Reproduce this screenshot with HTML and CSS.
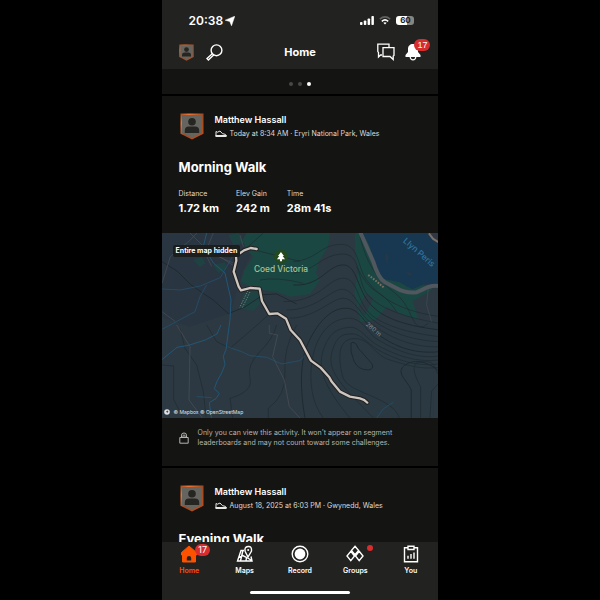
FILE: index.html
```
<!DOCTYPE html>
<html lang="en">
<head>
  <meta charset="UTF-8">
  <meta name="viewport" content="width=device-width, initial-scale=1.0">
  <title>Home</title>
  <link rel="stylesheet" href="styles.css">
</head>
<body>
  <!-- Shared shapes -->
  <svg class="defs" aria-hidden="true">
    <defs>
      <linearGradient id="frame" x1="0" y1="0" x2="1" y2="1">
        <stop offset="0" stop-color="#9c4d25"/>
        <stop offset=".2" stop-color="#ee7434"/>
        <stop offset=".5" stop-color="#9b4b25"/>
        <stop offset="1" stop-color="#c64d17"/>
      </linearGradient>
      <symbol id="avatar" viewBox="0 0 24 27">
        <path d="M.5.5h23v20.2L12 26.5.5 20.7z" fill="url(#frame)"/>
        <path d="M2 2h20v17.8l-10 5-10-5z" fill="#66645f"/>
        <circle cx="12" cy="8.8" r="3.8" fill="#252522"/>
        <path d="M4.800 20v-2.500q0-4 4.200-4h6q4.200 0 4.200 4V20z" fill="#252522"/>
      </symbol>
      <symbol id="shoe" viewBox="0 0 12 8">
        <path d="M1 6V1.500l1.500.7L5 1l2.500 2.700 2.700.6q1 .5 1 1.700z" fill="none" stroke="#e8e8e5"/>
        <path d="M.5 5h11v2H.5z" fill="#e8e8e5"/>
      </symbol>
    </defs>
  </svg>

  <div class="phone">
    <header class="header">
      <div class="status-bar">
        <div class="clock">
          <span>20:38</span>
          <svg width="10" height="10" viewBox="0 0 10 10"><path d="M9.800.200 6.500 9.800 4.800 5.500.200 4.200z" fill="#fff" stroke="#fff" stroke-width=".5" stroke-linejoin="round"/></svg>
        </div>
        <div class="signals">
          <svg width="14" height="9" viewBox="0 0 14 9" fill="#fff">
            <rect x="0" y="6" width="2.500" height="3" rx=".8"/>
            <rect x="3.800" y="4.500" width="2.500" height="4.500" rx=".8"/>
            <rect x="7.600" y="2.500" width="2.500" height="6.500" rx=".8"/>
            <rect x="11.400" y="0" width="2.500" height="9" rx=".8"/>
          </svg>
          <svg width="12" height="9" viewBox="0 0 12 9" fill="none" stroke-width="1.600">
            <path d="M.8 3.200q5.200-4.500 10.400 0" stroke="#62625f"/>
            <path d="M2.800 5.300q3.200-2.700 6.400 0" stroke="#fff"/>
            <path d="M4.300 6.800q1.700-1.300 3.400 0L6 8.600z" fill="#fff"/>
          </svg>
          <span class="battery">60</span>
        </div>
      </div>
      <div class="toolbar">
        <div class="toolbar-side">
          <button class="icon-btn" aria-label="Profile"><svg width="15" height="17"><use href="#avatar"/></svg></button>
          <button class="icon-btn" aria-label="Search">
            <svg width="17" height="17" viewBox="0 0 17 17" fill="none" stroke="#fff" stroke-width="1.400">
              <circle cx="10.500" cy="6.300" r="5.400"/>
              <path d="m6.500 9.500-5.500 5 1.400 1.500 5.500-5.200"/>
            </svg>
          </button>
        </div>
        <h1 class="page-title">Home</h1>
        <div class="toolbar-side right">
          <button class="icon-btn" aria-label="Messages">
            <svg width="18" height="18" viewBox="0 0 18 18" fill="none" stroke="#fff" stroke-width="1.300">
              <path d="M5 12H3.500L1.500 14V9.500L.8 8.500V1.200H12V4"/>
              <path d="M6 4.700h11v7.800l-.8.500v3.500L13 13.500H6z"/>
            </svg>
          </button>
          <button class="icon-btn" aria-label="Notifications">
            <svg width="16" height="18" viewBox="0 0 16 18" fill="#fff">
              <path d="M8 1C5 1 3 3 3 6v3L.5 12v2h15v-2L13 9V6c0-3-2-5-5-5z"/>
              <path d="M5.200 14q.3 2.800 2.800 2.800t2.800-2.800" fill="#222220" stroke="#fff" stroke-width="1.200"/>
            </svg>
            <span class="badge">17</span>
          </button>
        </div>
      </div>
    </header>

    <main class="feed">
      <div class="dots">
        <span class="dot"></span>
        <span class="dot"></span>
        <span class="dot active"></span>
      </div>

      <article class="card">
        <div class="card-body">
          <div class="athlete">
            <svg class="avatar" width="24" height="27"><use href="#avatar"/></svg>
            <div>
              <h3 class="name">Matthew Hassall</h3>
              <p class="meta"><svg width="12" height="8"><use href="#shoe"/></svg>Today at 8:34 AM · Eryri National Park, Wales</p>
            </div>
          </div>
          <h2 class="activity-title">Morning Walk</h2>
          <dl class="stats">
            <div><dt>Distance</dt><dd>1.72 km</dd></div>
            <div><dt>Elev Gain</dt><dd>242 m</dd></div>
            <div><dt>Time</dt><dd>28m 41s</dd></div>
          </dl>
        </div>

        <div class="map">
          <svg class="map-canvas" viewBox="6 9 831 555">
            <rect width="840" height="585" fill="#2c3942"/>
            <path d="M0 0h310L250 120 210 250 90 290 0 260z" fill="#293541"/>
            <path d="M430 290h390v270H500z" fill="#2b3b43" opacity=".6"/>

            <!-- woodland -->
            <g fill="#1b4743">
              <path d="M265 0h247l-8 50-28 45-8 35 12 20-30 42-58 8-40-14-62-8-48-22 12-36 26-40-20-20-12-30z"/>
              <path d="M585 0h70l55 130 40 60 26 80-45-15-50-25-35 40-45 5-18-90 12-60-10-60z"/>
              <path d="M660 175l80-30 50 20 30 12-60 35-50-10z"/>
              <path d="M250 190l48-10 10 35-28 28-40-8zM100 90l25-10 12 20-18 12zM160 105l35-8 5 20-25 12zM205 15l30-6 20 30-35 6z" opacity=".75"/>
            </g>
            <path d="M620 190l20 15-25 50-22-20z" fill="#2b3942"/>

            <!-- lake -->
            <path d="M602 0h240v165l-50-2-35 15-40-22-46-9-25-42-18-60z" fill="#173850"/>
            <path d="M678 65l8 15-4 25-6-20zM738 125l22 4-12 10z" fill="#25384a"/>
            <path d="M800 0h40v45l-22-14z" fill="#303943"/>

            <!-- contour lines -->
            <g fill="none" stroke="#1e2a30" stroke-width="2">
              <path d="M6 95l45 28 40 40 40 28 30 20 44 40 50-20 55-37 40-2 60 30" stroke-width="3"/>
              <path d="M400 95C470 90 480 45 540 43S590 110 620 150 700 240 840 260"/>
              <path d="M400 130C470 120 485 75 545 72S590 150 620 190 720 260 840 280"/>
              <path d="M400 165C480 170 500 110 545 105S590 170 625 215 720 285 840 300" stroke-width="3"/>
              <path d="M370 215C480 215 500 150 545 145S590 200 620 240 740 310 840 320"/>
              <path d="M380 240C470 240 510 180 545 178S595 230 630 262 740 332 840 335"/>
              <path d="M390 265C470 262 515 205 550 205S600 255 640 285 750 355 840 350"/>
              <path d="M435 564C420 480 420 400 440 350S500 240 550 235 610 280 650 310 750 375 840 365" stroke-width="3"/>
              <path d="M490 564C440 500 450 400 465 355S510 270 560 265 620 310 655 330 760 390 840 378"/>
              <path d="M570 564C500 480 470 420 490 360S540 295 570 292 620 330 660 350 760 400 840 390"/>
              <path d="M640 564C560 480 500 430 515 370S555 312 580 312 630 350 670 368 760 412 840 402"/>
              <path d="M718 564C700 500 560 490 548 440S530 330 580 326 640 375 690 390 780 420 840 412"/>
              <path d="M573 340q12-10 22 15l40 45q10 18-10 20-30 0-42-25-14-30-10-55z" stroke-width="3"/>
              <path d="M754 564V480C740 450 710 430 730 410S790 385 840 425" stroke-width="3"/>
              <path d="M782 564V470C760 430 750 395 790 395S815 405 840 440M810 564l5-80 22-25"/>
              <path d="M600 20q15 60 40 100t60 65 55 75 50 20M590 110q30 60 60 75t60 60"/>
              <path d="M310 9l-50 45 160 40M300 150q50-10 130 10"/>
              <path d="M60 295l15 60 35 50 20 80 8 75M6 405l35 3 0 100 25 50M140 285l30 50 40 20 70-60 45-40"/>
              <path d="M350 285q-10 40-50 80t-30 80-60 60l8 59M410 285q-40 70-35 140t-50 110v29"/>
            </g>

            <!-- tracks -->
            <g fill="none" stroke="#4d5057" stroke-width="2">
              <path d="M50 285l40 65-3 160 40 54M328 285v25l25 5-15 65 35 70 15 80 32 34M285 520"/>
              <path d="M6 160l25-80 60-50 20-21M90 9l60 60 70 30M160 9l-25 60 20 40M6 245l40 30M225 110l-60-40M240 15l10 35"/>
              <path d="M805 175l-5 50 15 50" stroke-width="1.500"/>
            </g>

            <!-- streams -->
            <g fill="none" stroke="#225675" stroke-width="3">
              <path d="M6 389l45-37 35-6 50-16 35-18 12-27"/>
              <path d="M140 9l-10 40 30 50 35 30 18 80-3 60-12 90-8 20 5 25-10 25-14 25-8 22 15 15-10 15-20 12 8 58"/>
              <path d="M6 177l55 3 60-12 60-25 40-70M140 165l-20 35-15 45-65 35-34 18" stroke-width="2"/>
              <path d="M200 350l45 15 25 12 50 5 45 20 55-10 15-15M110 500l45 3M700 517l-30 20-20 27" stroke-width="2"/>
            </g>

            <!-- roads -->
            <path d="M598 0l42 95q15 50 35 62l35 18q25 15 60 12l35-16q35-10 50 8" fill="none" stroke="#50575e" stroke-width="12"/>
            <path d="M625 135l20 15 28 24" fill="none" stroke="#806d66" stroke-width="6" stroke-dasharray="5 4"/>
            <path d="M807 10l12 16 21 13" fill="none" stroke="#77706c" stroke-width="6"/>
            <path d="M264 182l-12 24-13 27M270 186l-12 25-12 24" fill="none" stroke="#757a80" stroke-width="3" stroke-dasharray="4 4"/>

            <!-- recorded route -->
            <g fill="none" stroke-linecap="round" stroke-linejoin="round">
              <path d="M290 57l-18-3-20 7-24 17 1 14-8 33 15 45 7 11 29-7 27 2 7 37 22 39 24-2 26 16 14 34 28 30 33 62 29 21 26 29 7 13 25 30 30 15 30 5q14 3 22 13" stroke="#24211f" stroke-width="13"/>
              <path d="M290 57l-18-3-20 7-24 17 1 14-8 33 15 45 7 11 29-7 27 2 7 37 22 39 24-2 26 16 14 34 28 30 33 62 29 21 26 29 7 13 25 30 30 15 30 5q14 3 22 13" stroke="#cbc6c1" stroke-width="7"/>
            </g>

            <circle cx="363" cy="80" r="21" fill="#23491e"/>
            <path d="M363 66l9 12h-4l7 10h-9v6h-6v-6h-9l7-10h-4z" fill="#fff"/>
            <text class="place" x="363" y="126">Coed Victoria</text>
            <text class="water" transform="translate(728 35) rotate(41)">Llyn Peris</text>
            <text class="contour" transform="translate(617 285) rotate(41)">280 m</text>
          </svg>
          <span class="map-hidden">Entire map hidden</span>
          <div class="credits">
            <svg width="6" height="6" viewBox="0 0 6 6"><circle cx="3" cy="3" r="2.800" fill="#dfe2e4"/><path d="m3.300 1.300.4 1 .9.400-.9.500-.4.900-.5-.9-.9-.5.900-.4z" fill="#2c3942"/></svg>
            <span>© Mapbox © OpenStreetMap</span>
          </div>
        </div>

        <div class="privacy">
          <svg width="10" height="12" viewBox="0 0 10 12" fill="none" stroke="#b4b4b0">
            <path d="M.8 5.500h8.400v5.700H.8zM2.500 5.500V3.200Q2.500 1 5 1t2.500 2.200v2.300M4 5.500V3.800q0-.8 1-.8t1 .8v1.700"/>
          </svg>
          <p>Only you can view this activity. It won't appear on segment leaderboards and may not count toward some challenges.</p>
        </div>
      </article>

      <article class="card">
        <div class="card-body">
          <div class="athlete">
            <svg class="avatar" width="24" height="27"><use href="#avatar"/></svg>
            <div>
              <h3 class="name">Matthew Hassall</h3>
              <p class="meta"><svg width="12" height="8"><use href="#shoe"/></svg>August 18, 2025 at 6:03 PM · Gwynedd, Wales</p>
            </div>
          </div>
          <h2 class="activity-title">Evening Walk</h2>
        </div>
      </article>
    </main>

    <nav class="tab-bar">
      <div class="tabs">
        <a class="tab active" href="#">
          <svg width="18" height="18" viewBox="0 0 18 18"><path d="M9 1 1.500 7.500V10h1v7h13v-7h1V7.500z" fill="#fc5200" stroke="#fc5200" stroke-linejoin="round"/><path d="M6.800 15.500V13q0-2 2.200-2t2.200 2v2.500z" fill="#222220"/></svg>
          <span>Home</span>
          <span class="badge">17</span>
        </a>
        <a class="tab" href="#">
          <svg width="18" height="18" viewBox="0 0 18 18" fill="none" stroke="#fff" stroke-width="1.400">
            <path d="M8 5.500H5L1.500 16H16l-1-4.500M6.800 6 4.500 16M10 16l.5-4M2.800 12.500l4-2 4 2 5 3"/>
            <path d="M12 12 9.200 6.500Q8 2 12 1.500t3.500 4.500z"/>
            <circle cx="12.200" cy="5" r="1" fill="#fff" stroke="none"/>
          </svg>
          <span>Maps</span>
        </a>
        <a class="tab" href="#">
          <svg width="18" height="18" viewBox="0 0 18 18"><circle cx="9" cy="9" r="7.800" fill="none" stroke="#fff" stroke-width="1.400"/><circle cx="9" cy="9" r="5.400" fill="#fff"/></svg>
          <span>Record</span>
        </a>
        <a class="tab" href="#">
          <svg width="18" height="18" viewBox="0 0 18 18" fill="none" stroke="#fff" stroke-width="1.400">
            <path d="m9 1.300 3.600 4.200L9 9.700 5.400 5.500zM4.800 6.300l3.700 4.700-3.700 4.700L1 11zM13.200 6.300 17 11l-3.800 4.700L9.500 11z"/>
          </svg>
          <span>Groups</span>
          <span class="new-dot"></span>
        </a>
        <a class="tab" href="#">
          <svg width="18" height="18" viewBox="0 0 18 18" fill="none" stroke="#fff" stroke-width="1.400">
            <path d="M6 2.700H2.500v14h13v-14H12M6 1.200h6v3.300H6zM6 13.800v-3M9 13.800V9M12 13.800V7.500"/>
          </svg>
          <span>You</span>
        </a>
      </div>
      <div class="home-indicator"></div>
    </nav>
  </div>
</body>
</html>
```
FILE: styles.css
```
* {
  box-sizing: border-box;
  margin: 0;
  padding: 0;
}

body {
  background: #000;
  color: #fff;
  font-family: Inter, 'Liberation Sans', sans-serif;
}

svg {
  display: block;
  flex-shrink: 0;
}

.defs {
  position: absolute;
  width: 0;
  height: 0;
}

.phone {
  height: 100vh;
  aspect-ratio: 6 / 13;
  max-width: 100%;
  margin: 0 auto;
  display: flex;
  flex-direction: column;
  overflow: hidden;
}

/* Header */
.header {
  background: #222220;
  padding: 12px 16px 0;
}

.status-bar {
  display: flex;
  justify-content: space-between;
  align-items: center;
  height: 17px;
  padding: 0 8px 0 11px;
}

.clock,
.signals {
  display: flex;
  align-items: center;
}

.clock {
  gap: 2px;
  font-size: 12px;
  font-weight: 600;
}

.signals {
  gap: 5px;
}

.battery {
  width: 18px;
  height: 9px;
  border-radius: 3px;
  background: linear-gradient(90deg, #fff 60%, #858582 60%);
  color: #222220;
  font-size: 8px;
  font-weight: 700;
  line-height: 9px;
  text-align: center;
}

.toolbar {
  display: flex;
  align-items: center;
  height: 34px;
  margin: 6px 0 0;
}

.toolbar-side {
  flex: 1;
  display: flex;
  gap: 12px;
  padding: 0 1px;
}

.toolbar-side.right {
  gap: 10px;
  justify-content: flex-end;
}

.icon-btn {
  position: relative;
  border: none;
  background: none;
  cursor: pointer;
}

.page-title {
  font-size: 11px;
  font-weight: 700;
}

.badge {
  position: absolute;
  top: -4px;
  left: 9px;
  padding: 0 3px;
  border-radius: 6px;
  background: #d92d2d;
  color: #fff;
  font-size: 9px;
  font-weight: 400;
  line-height: 12px;
}

/* Feed */
.feed {
  flex: 1;
  min-height: 0;
  overflow: hidden;
  display: flex;
  flex-direction: column;
  gap: 2px;
}

.dots {
  flex-shrink: 0;
  display: flex;
  justify-content: center;
  gap: 5px;
  padding: 13px 0 8px;
  background: #141412;
}

.dot {
  width: 4px;
  height: 4px;
  border-radius: 50%;
  background: #484846;
}

.dot.active {
  background: #fff;
}

.card {
  flex-shrink: 0;
  background: #141412;
}

.card-body {
  padding: 17px;
}

.athlete {
  display: flex;
  align-items: flex-start;
  gap: 11px;
  padding-left: 1px;
}

.name {
  font-size: 9px;
  font-weight: 600;
  line-height: 14px;
}

.meta {
  display: flex;
  align-items: center;
  gap: 3px;
  color: #dededb;
  font-size: 7px;
  line-height: 14px;
  white-space: nowrap;
}

.activity-title {
  margin-top: 16px;
  font-size: 13px;
  font-weight: 700;
  line-height: 20px;
}

.stats {
  display: flex;
  gap: 17px;
  margin-top: 11px;
}

.stats dt {
  color: #dededb;
  font-size: 7px;
  line-height: 12px;
}

.stats dd {
  font-size: 11px;
  font-weight: 700;
  line-height: 16px;
}

/* Map */
.map {
  position: relative;
}

.map-canvas {
  width: 100%;
}

.place,
.water {
  font-size: 25px;
  font-weight: 500;
}

.place {
  fill: #a9c48c;
  text-anchor: middle;
}

.water {
  fill: #3076a0;
}

.contour {
  fill: #858c91;
  font-size: 18px;
}

.map-hidden {
  position: absolute;
  top: 12px;
  left: 11px;
  padding: 0 3px;
  border-radius: 2px;
  background: #1c1d1d;
  font-size: 7px;
  font-weight: 700;
  line-height: 12px;
}

.credits {
  position: absolute;
  bottom: 2px;
  left: 2px;
  display: flex;
  align-items: center;
  gap: 4px;
  color: #dfe2e4;
  font-size: 5px;
  line-height: 7px;
}

.privacy {
  display: flex;
  align-items: center;
  gap: 9px;
  padding: 10px 17px 18px;
  color: #b4b4b0;
  font-size: 7px;
  line-height: 10px;
}

/* Bottom navigation */
.tab-bar {
  background: #222220;
  padding: 3px 0 6px;
}

.tabs {
  display: flex;
}

.tab {
  position: relative;
  flex: 1;
  display: flex;
  flex-direction: column;
  align-items: center;
  gap: 2px;
  color: #fff;
  font-size: 7px;
  font-weight: 600;
  line-height: 12px;
  text-decoration: none;
}

.tab.active {
  color: #fc5200;
}

.tab .badge {
  top: -1px;
  left: 50%;
  margin-left: 6px;
}

.new-dot {
  position: absolute;
  top: 0;
  left: 50%;
  width: 6px;
  height: 6px;
  margin-left: 12px;
  border-radius: 50%;
  background: #d92d2d;
}

.home-indicator {
  width: 36%;
  height: 3px;
  margin: 14px auto 0;
  border-radius: 2px;
  background: #fff;
}
```
